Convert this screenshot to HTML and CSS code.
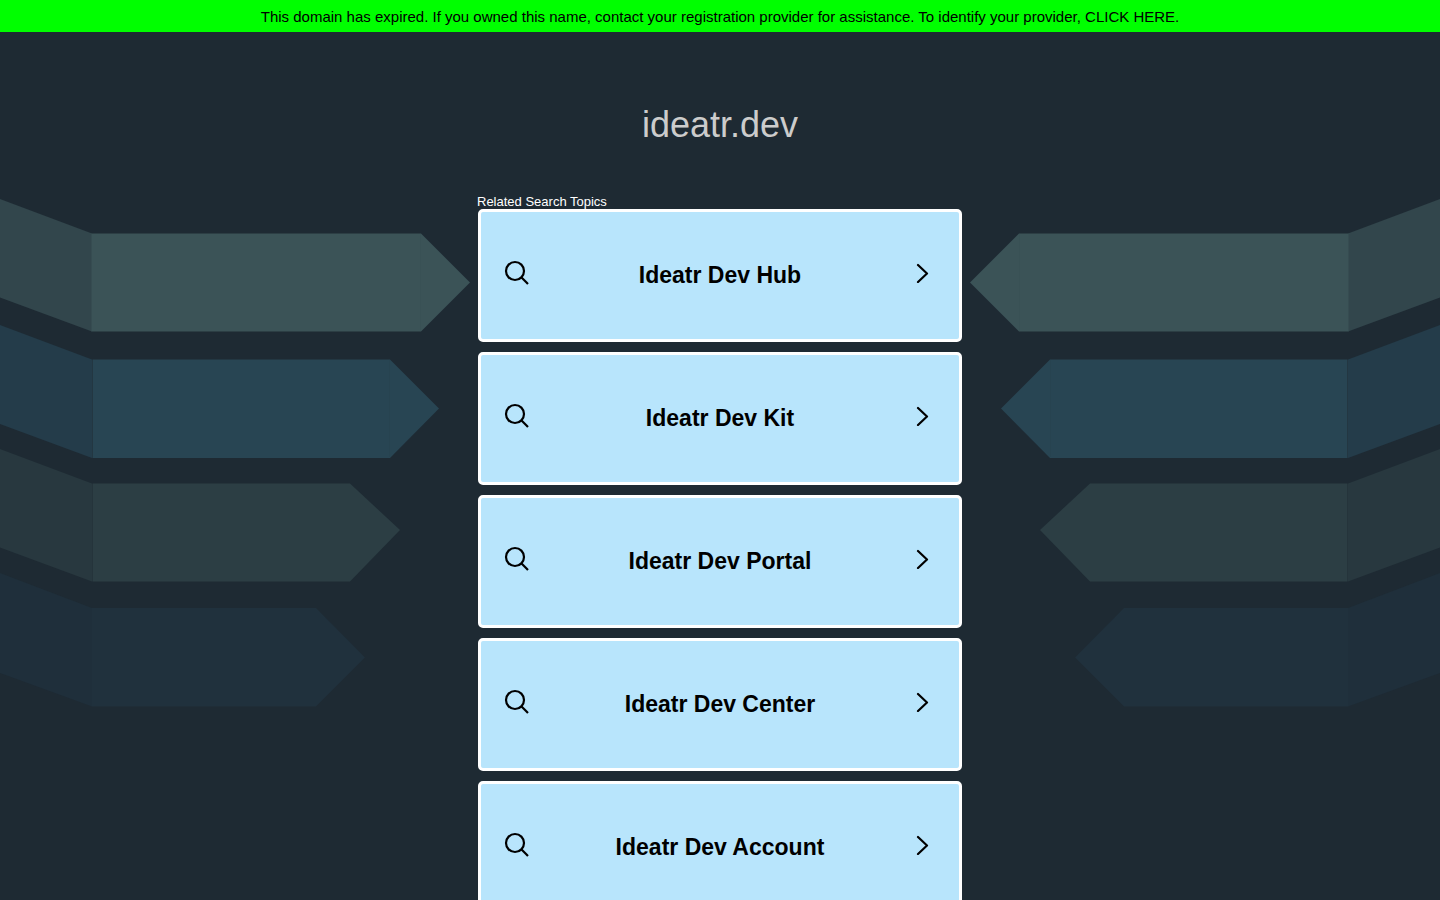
FILE: index.html
```html
<!DOCTYPE html>
<html lang="en">
<head>
    <meta charset="UTF-8">
    <meta name="viewport" content="width=device-width, initial-scale=1.0">
    <title>ideatr.dev</title>
    <link rel="stylesheet" href="styles.css">
</head>
<body>
    <svg class="icon-defs" aria-hidden="true">
        <symbol id="search" viewBox="0 0 26 26">
            <circle cx="11" cy="11" r="9" fill="none" stroke="currentColor" stroke-width="2.2"/>
            <path d="M17.3 17.3L24 24" fill="none" stroke="currentColor" stroke-width="2.2"/>
        </symbol>
        <symbol id="chevron" viewBox="0 0 14 20">
            <path d="M2 2L11 10.5L2 19" fill="none" stroke="currentColor" stroke-width="2.2" stroke-linecap="round" stroke-linejoin="round"/>
        </symbol>
        <symbol id="arrows" viewBox="0 0 470 510">
            <path fill="#32464c" d="M0 0L92 34.5V132.5L0 98.5z"/>
            <path fill="#3b5357" d="M91.5 34.5H421L470 83.5L421 132.5H91.5z"/>
            <path fill="#243c4a" d="M0 126L92 160.5V259L0 225z"/>
            <path fill="#284553" d="M92.5 160.5H390L439 209.5L390 259H92.5z"/>
            <path fill="#28383f" d="M0 250L92 284.5V382.5L0 348.5z"/>
            <path fill="#2c3e44" d="M92.5 284.5H350L400 331L350 382.5H92.5z"/>
            <path fill="#1f2f3b" d="M0 374L92 409V507.5L0 474z"/>
            <path fill="#20313d" d="M92 409H316L365 458.5L316 507.5H92z"/>
            <path stroke="#395155" d="M420.5 35V132"/>
            <path stroke="#274350" d="M389.5 161V258"/>
        </symbol>
    </svg>

    <header class="banner">
        <a href="#">This domain has expired. If you owned this name, contact your registration provider for assistance. To identify your provider, CLICK HERE.</a>
    </header>

    <svg class="arrows" aria-hidden="true"><use href="#arrows"/></svg>
    <svg class="arrows arrows-right" aria-hidden="true"><use href="#arrows"/></svg>

    <main class="content">
        <h1>ideatr.dev</h1>
        <h2 class="label">Related Search Topics</h2>
        <nav class="topics">
            <a class="topic" href="#">
                <svg class="search" aria-hidden="true"><use href="#search"/></svg>
                <span class="title">Ideatr Dev Hub</span>
                <svg class="chevron" aria-hidden="true"><use href="#chevron"/></svg>
            </a>
            <a class="topic" href="#">
                <svg class="search" aria-hidden="true"><use href="#search"/></svg>
                <span class="title">Ideatr Dev Kit</span>
                <svg class="chevron" aria-hidden="true"><use href="#chevron"/></svg>
            </a>
            <a class="topic" href="#">
                <svg class="search" aria-hidden="true"><use href="#search"/></svg>
                <span class="title">Ideatr Dev Portal</span>
                <svg class="chevron" aria-hidden="true"><use href="#chevron"/></svg>
            </a>
            <a class="topic" href="#">
                <svg class="search" aria-hidden="true"><use href="#search"/></svg>
                <span class="title">Ideatr Dev Center</span>
                <svg class="chevron" aria-hidden="true"><use href="#chevron"/></svg>
            </a>
            <a class="topic" href="#">
                <svg class="search" aria-hidden="true"><use href="#search"/></svg>
                <span class="title">Ideatr Dev Account</span>
                <svg class="chevron" aria-hidden="true"><use href="#chevron"/></svg>
            </a>
        </nav>
    </main>
</body>
</html>
```

FILE: styles.css
```css
* {
    box-sizing: border-box;
}

body {
    position: relative;
    margin: 0;
    min-height: 100vh;
    background-color: #1e2a33;
    font-family: "Liberation Sans", Arial, sans-serif;
}

.icon-defs {
    position: absolute;
    width: 0;
    height: 0;
}

.banner {
    padding: 9px 8px 7px;
    background-color: #00ff00;
    font-size: 15px;
    line-height: 16px;
    text-align: center;
}

.banner a {
    color: #000000;
    text-decoration: none;
}

/* background arrows pointing at the topics */
.arrows {
    position: absolute;
    top: 199px;
    left: 0;
    width: 470px;
    height: 510px;
}

.arrows-right {
    left: auto;
    right: 0;
    transform: scaleX(-1);
}

.content {
    position: relative;
    max-width: 486px;
    margin: 0 auto;
    padding: 72px 1px 16px;
}

h1 {
    margin: 0 0 48px;
    color: #cccccc;
    font-size: 36px;
    font-weight: normal;
    line-height: 42px;
    text-align: center;
}

.label {
    margin: 0 -1px;
    color: #ffffff;
    font-size: 13px;
    font-weight: normal;
    line-height: 15px;
}

.topics {
    display: flex;
    flex-direction: column;
    gap: 10px;
}

.topic {
    display: flex;
    align-items: center;
    min-height: 133px;
    padding: 0 23px 2px;
    border: 3px solid #ffffff;
    border-radius: 5px;
    background-color: #b8e5fc;
    color: #000000;
    text-decoration: none;
}

.topic:hover {
    background-color: #d3effd;
}

.title {
    flex: 1;
    font-size: 23px;
    font-weight: bold;
    line-height: 26px;
    text-align: center;
}

.search,
.chevron {
    width: 26px;
    height: 26px;
    margin-bottom: 4px;
}

.chevron {
    height: 20px;
}
```
